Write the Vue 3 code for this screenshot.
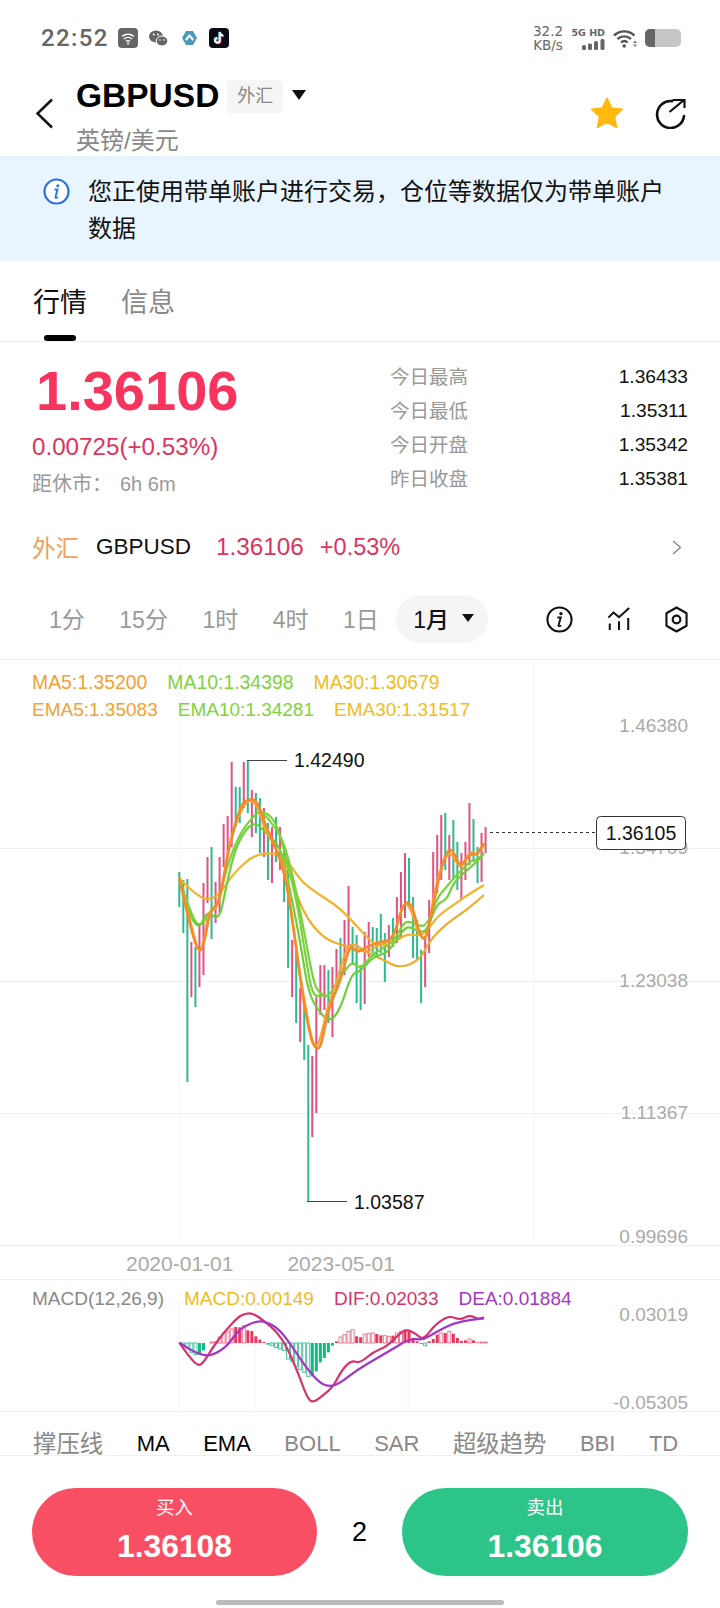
<script setup>
// coordinates of the chart are page pixels, series are traced at 3x
const barX = (i) => 179.3 + 4.03 * i

const candles = [
  ['g', 872, 907], ['g', 880, 933], ['g', 879, 1082], ['r', 942, 997], ['g', 947, 1007], ['r', 923, 987], ['r', 883, 975],
  ['r', 857, 903], ['g', 847, 939], ['r', 882, 923], ['r', 857, 913], ['r', 824, 867], ['r', 816, 855], ['r', 762, 847],
  ['g', 787, 827], ['g', 787, 823], ['r', 762, 808], ['g', 760, 813], ['r', 790, 837], ['g', 793, 833], ['g', 798, 853],
  ['r', 808, 857], ['g', 823, 880], ['r', 827, 883], ['g', 817, 862], ['r', 827, 870], ['g', 850, 902], ['g', 870, 968],
  ['r', 940, 997], ['g', 945, 1023], ['r', 988, 1042], ['g', 1000, 1060], ['g', 1045, 1201], ['r', 1056, 1137], ['r', 997, 1113],
  ['r', 965, 1015], ['r', 965, 1010], ['g', 970, 1023], ['r', 967, 1037], ['r', 949, 990], ['g', 938, 977], ['r', 920, 975],
  ['r', 886, 947], ['g', 927, 965], ['g', 935, 1003], ['g', 965, 1010], ['r', 932, 1004], ['r', 922, 957], ['g', 927, 953],
  ['g', 928, 957], ['g', 914, 953], ['g', 933, 982], ['r', 925, 957], ['g', 918, 947], ['r', 897, 943], ['r', 872, 937],
  ['r', 853, 918], ['g', 858, 907], ['g', 897, 958], ['g', 920, 960], ['g', 950, 1003], ['r', 937, 987], ['r', 900, 953],
  ['r', 852, 910], ['r', 835, 893], ['r', 815, 880], ['g', 813, 870], ['r', 835, 880], ['g', 820, 880], ['g', 842, 890],
  ['r', 853, 900], ['r', 842, 880], ['r', 803, 865], ['g', 819, 862], ['g', 847, 883], ['r', 833, 882], ['r', 827, 853],
]

function smooth(flat, ox, oy) {
  const p = []
  for (let i = 0; i < flat.length; i += 2) p.push([ox + flat[i] / 3, oy + flat[i + 1] / 3])
  let d = `M${p[0][0].toFixed(1)} ${p[0][1].toFixed(1)}`
  for (let i = 1; i < p.length - 1; i++) {
    const mx = (p[i][0] + p[i + 1][0]) / 2
    const my = (p[i][1] + p[i + 1][1]) / 2
    d += `Q${p[i][0].toFixed(1)} ${p[i][1].toFixed(1)} ${mx.toFixed(1)} ${my.toFixed(1)}`
  }
  const l = p[p.length - 1]
  return d + `L${l[0].toFixed(1)} ${l[1].toFixed(1)}`
}

const priceLines = [
  { color: '#f3b32a', w: 2.2, d: smooth([58, 415, 120, 480, 170, 475, 220, 400, 280, 345, 340, 338, 375, 350, 420, 420, 470, 460, 520, 490, 560, 525, 610, 580, 650, 620, 700, 610, 740, 580, 790, 590, 830, 530, 880, 495, 930, 460, 972, 435], 160, 740) },
  { color: '#f0ab2a', w: 2.2, d: smooth([375, 360, 410, 470, 450, 550, 500, 600, 560, 620, 620, 635, 670, 660, 720, 685, 780, 660, 810, 600, 860, 550, 920, 510, 972, 465], 160, 740) },
  { color: '#78d23c', w: 2.2, d: smooth([300, 210, 360, 270, 395, 390, 430, 560, 455, 700, 470, 750, 490, 765], 160, 740) },
  { color: '#78d23c', w: 2.2, d: smooth([58, 415, 85, 500, 118, 570, 150, 510, 170, 510, 200, 380, 240, 280, 275, 235, 300, 210, 345, 235, 375, 340, 410, 480, 440, 670, 458, 770, 490, 765, 505, 770, 530, 730, 575, 660, 600, 690, 640, 640, 680, 620, 710, 590, 735, 540, 770, 555, 800, 560, 830, 475, 860, 440, 885, 410, 910, 385, 935, 360, 950, 360, 972, 340], 160, 740) },
  { color: '#6cd03a', w: 2.2, d: smooth([58, 415, 85, 520, 118, 570, 140, 510, 178, 545, 200, 430, 230, 310, 280, 240, 320, 280, 360, 320, 380, 400, 420, 600, 445, 760, 480, 820, 510, 845, 540, 810, 575, 700, 600, 695, 640, 650, 680, 640, 710, 600, 740, 555, 775, 575, 800, 575, 830, 490, 860, 480, 880, 430, 910, 400, 940, 375, 972, 340], 160, 740) },
  { color: '#f5a33a', w: 2.2, d: smooth([58, 415, 90, 540, 118, 650, 135, 590, 145, 510, 178, 505, 205, 320, 235, 230, 262, 178, 290, 190, 310, 260, 345, 320, 375, 380, 395, 520, 420, 700, 440, 820, 455, 900, 470, 925, 485, 880, 500, 810, 525, 740, 560, 620, 585, 610, 620, 640, 660, 610, 700, 600, 730, 480, 755, 510, 775, 585, 800, 600, 815, 500, 840, 385, 870, 330, 890, 370, 905, 385, 930, 330, 950, 350, 972, 315], 160, 740) },
  { color: '#f28c28', w: 2.6, d: smooth([58, 415, 90, 560, 118, 645, 135, 600, 150, 510, 178, 490, 205, 330, 240, 200, 262, 178, 290, 178, 310, 240, 340, 305, 375, 400, 400, 560, 425, 750, 445, 860, 460, 920, 480, 930, 495, 860, 510, 790, 540, 730, 570, 610, 590, 640, 620, 620, 660, 605, 700, 600, 730, 485, 755, 490, 775, 570, 795, 610, 815, 520, 835, 420, 860, 330, 880, 330, 900, 385, 930, 340, 950, 345, 972, 310], 160, 740) },
]

const axisLabels = [
  { y: 725, t: '1.46380' },
  { y: 847, t: '1.34709' },
  { y: 980, t: '1.23038' },
  { y: 1112, t: '1.11367' },
  { y: 1236, t: '0.99696' },
]

const macdZero = 1343
// height in 3x pixels, h = hollow
const histRaw = [
  0, '-5h', '-15h', '-28h', '-35h', -35, -22, 0, '3h', '4h', '18h', '30h', '35h', '42h', 48, 47, '52h', 38, 36, 20, 10, 3,
  -5, '-8h', '-14h', '-18h', '-22h', '-48h', '-55h', '-70h', '-80h', '-88h', '-100h', -100, -85, -58, -45, -28, -8, 5,
  '18h', '25h', '35h', '40h', 20, 17, '27h', '29h', '30h', 27, 23, '22h', '20h', 22, '30h', '35h', 40, 35, 15, 5, -3,
  '-8h', 5, 12, 25, '30h', 30, '35h', 28, 15, 6, 8, '12h', 8, 2, '3h', '3h',
]
const hist = histRaw.map((v, i) => {
  const hollow = typeof v === 'string'
  const n = parseFloat(v) / 3
  const h = Math.abs(n)
  const up = n >= 0
  return {
    x: barX(i) - 1.5,
    y: up ? macdZero - h : macdZero,
    w: 3,
    h,
    fill: hollow ? 'none' : up ? '#e8375a' : '#13b981',
    stroke: hollow ? (up ? '#ee7890' : '#46c39f') : 'none',
  }
}).filter((b) => b.h > 0)

const difPath = smooth([28, 158, 60, 205, 88, 230, 105, 210, 130, 170, 160, 130, 200, 85, 225, 70, 250, 70, 285, 95, 320, 125, 350, 170, 385, 250, 410, 320, 428, 340, 460, 315, 490, 290, 515, 240, 545, 210, 570, 220, 610, 185, 650, 170, 690, 130, 710, 118, 735, 130, 760, 150, 790, 110, 815, 90, 840, 78, 870, 90, 900, 75, 925, 88, 942, 82], 170, 1290)
const deaPath = smooth([28, 158, 60, 180, 100, 197, 130, 195, 170, 170, 210, 115, 260, 93, 290, 95, 330, 120, 370, 175, 410, 235, 450, 280, 480, 290, 510, 280, 560, 240, 620, 205, 680, 170, 720, 145, 760, 150, 800, 125, 850, 100, 900, 90, 942, 85], 170, 1290)

const stats = [
  { label: '今日最高', value: '1.36433' },
  { label: '今日最低', value: '1.35311' },
  { label: '今日开盘', value: '1.35342' },
  { label: '昨日收盘', value: '1.35381' },
]
const periods = ['1分', '15分', '1时', '4时', '1日']
const indicators = [
  { t: '撑压线', cjk: true },
  { t: 'MA', on: true },
  { t: 'EMA', on: true },
  { t: 'BOLL' },
  { t: 'SAR' },
  { t: '超级趋势', cjk: true },
  { t: 'BBI' },
  { t: 'TD' },
]
</script>

<template>
  <div class="page">
    <div class="status">
      <span class="time">22:52</span>
      <svg class="ic-box" width="20" height="20" viewBox="0 0 20 20">
        <rect width="20" height="20" rx="4" fill="#666" />
        <path d="M4 8.5c3.500-3 8.500-3 12 0M6 11c2.500-2 5.500-2 8 0M8 13.300c1.200-.8 2.800-.8 4 0" fill="none" stroke="#fff" stroke-width="1.400" />
        <circle cx="10" cy="15.500" r="1.100" fill="#fff" />
      </svg>
      <svg class="ic-chat" width="19" height="17" viewBox="0 0 19 17">
        <ellipse cx="7" cy="6.500" rx="7" ry="6" fill="#666" />
        <ellipse cx="13" cy="11" rx="5.800" ry="5" fill="#666" stroke="#fff" stroke-width="1" />
        <circle cx="4.800" cy="4.500" r="1" fill="#fff" />
        <circle cx="9" cy="4.500" r="1" fill="#fff" />
        <circle cx="11" cy="10" r=".8" fill="#fff" />
        <circle cx="15" cy="10" r=".8" fill="#fff" />
      </svg>
      <svg class="ic-hex" width="15" height="14" viewBox="0 0 15 14">
        <path d="M4 0h7l4 7-4 7H4L0 7z" fill="#4d98b8" />
        <path d="M3.800 9l3.700-4.500L11.200 9" fill="none" stroke="#fff" stroke-width="2" />
      </svg>
      <svg class="ic-tt" width="20" height="20" viewBox="0 0 20 20">
        <rect width="20" height="20" rx="4" fill="#0b0b12" />
        <path d="M10.800 4v8.400a2.300 2.300 0 1 1-2.300-2.300M10.800 4.500c.4 1.900 1.600 3 3.400 3.200" fill="none" stroke="#ff2f55" stroke-width="2" transform="translate(.7 .5)" />
        <path d="M10.800 4v8.400a2.300 2.300 0 1 1-2.300-2.300M10.800 4.500c.4 1.900 1.600 3 3.400 3.200" fill="none" stroke="#4fe6ea" stroke-width="2" transform="translate(-.5 -.3)" />
        <path d="M10.800 4v8.400a2.300 2.300 0 1 1-2.300-2.300M10.800 4.500c.4 1.900 1.600 3 3.400 3.200" fill="none" stroke="#fff" stroke-width="1.700" />
      </svg>
      <div class="spacer"></div>
      <div class="speed"><span>32.2</span><span>KB/s</span></div>
      <div class="net">
        <span>5G HD</span>
        <svg width="23" height="11" viewBox="0 0 23 11">
          <rect x="0" y="6" width="4" height="5" rx="1.500" fill="#666" />
          <rect x="6" y="4.500" width="4" height="6.500" rx="1.500" fill="#666" />
          <rect x="12" y="2" width="4" height="9" rx="1.500" fill="#666" />
          <rect x="18.500" y="0" width="4" height="11" rx="1.500" fill="#666" />
        </svg>
      </div>
      <svg class="ic-wifi" width="25" height="19" viewBox="0 0 25 19">
        <path d="M1 6.500c6-5.500 14.500-5.500 20.500 0M4.500 10c4-3.500 9.500-3.500 13.500 0M8 13.500c2-1.700 4.500-1.700 6.500 0" fill="none" stroke="#555" stroke-width="2.400" />
        <circle cx="11.200" cy="17" r="1.800" fill="#555" />
        <path d="M20 14l2-2.500 2 2.500zM20 15.500h4L22 18z" fill="#777" />
      </svg>
      <div class="battery"><div class="battery-level"></div></div>
    </div>

    <div class="header">
      <svg class="back" width="19" height="31" viewBox="0 0 19 31">
        <path d="M17 1.500L2.500 15.500 17 29.500" fill="none" stroke="#111" stroke-width="2.500" />
      </svg>
      <div class="title-col">
        <div class="title-row">
          <span class="symbol">GBPUSD</span>
          <span class="tag">外汇</span>
          <span class="tri big"></span>
        </div>
        <div class="subtitle">英镑/美元</div>
      </div>
      <div class="spacer"></div>
      <svg class="star" width="34" height="32" viewBox="0 0 36 34">
        <path d="M18 1.500l4.800 10.400 11.200 1.300-8.300 7.700 2.300 11.100L18 26.400 8 32l2.300-11.100L2 13.200l11.200-1.300z" fill="#ffb90f" stroke="#ffb90f" stroke-width="2" stroke-linejoin="round" />
      </svg>
      <svg class="share" width="32" height="31" viewBox="0 0 32 31">
        <path d="M17 3.100A13.500 13.500 0 1 0 29 18" fill="none" stroke="#111" stroke-width="2.600" stroke-linecap="round" />
        <path d="M14.500 14L29 2M17.500 2H29.500V10" fill="none" stroke="#111" stroke-width="2.200" />
      </svg>
    </div>

    <div class="banner">
      <svg class="banner-icon" width="27" height="27" viewBox="0 0 27 27">
        <circle cx="13.500" cy="13.500" r="12" fill="#fff" stroke="#2b6fe0" stroke-width="2.200" />
        <circle cx="14.800" cy="7.800" r="1.500" fill="#2b6fe0" />
        <path d="M11.500 11.500h3l-2 7.500c-.2 1 .8 1.200 2.400.3" fill="none" stroke="#2b6fe0" stroke-width="1.800" />
      </svg>
      <p class="banner-text">您正使用带单账户进行交易，仓位等数据仅为带单账户数据</p>
    </div>

    <div class="tabs">
      <div class="tab active">行情<i class="tab-bar"></i></div>
      <div class="tab">信息</div>
    </div>

    <div class="quote">
      <div class="quote-left">
        <div class="price">1.36106</div>
        <div class="change">0.00725(+0.53%)</div>
        <div class="close-in"><span>距休市：</span><span class="close-val">6h 6m</span></div>
      </div>
      <div class="stats">
        <div v-for="s in stats" :key="s.label" class="stat">
          <span class="stat-label">{{ s.label }}</span>
          <span class="stat-value">{{ s.value }}</span>
        </div>
      </div>
    </div>

    <div class="source">
      <span class="src-type">外汇</span>
      <span class="src-name">GBPUSD</span>
      <span class="src-price">1.36106</span>
      <span class="src-pct">+0.53%</span>
      <div class="spacer"></div>
      <svg width="10" height="15" viewBox="0 0 10 15">
        <path d="M1 1l7.500 6.500L1 14" fill="none" stroke="#888" stroke-width="1.400" />
      </svg>
    </div>

    <div class="periods">
      <span v-for="p in periods" :key="p" class="period">{{ p }}</span>
      <span class="period-on">1月<i class="tri"></i></span>
      <div class="tools">
        <svg width="27" height="27" viewBox="0 0 28 28">
          <circle cx="14" cy="14" r="12.500" fill="none" stroke="#111" stroke-width="2.200" />
          <circle cx="15.500" cy="8" r="1.700" fill="#111" />
          <path d="M11.800 12h3.500l-2.300 8c-.2 1 1 1.200 2.800.2" fill="none" stroke="#111" stroke-width="2" />
        </svg>
        <svg width="24" height="24" viewBox="0 0 26 26">
          <path d="M1.500 11.500L7 6l6 5L24 1" fill="none" stroke="#111" stroke-width="2.200" />
          <path d="M3 18v7M13 15.500V25M23 12v13" fill="none" stroke="#111" stroke-width="2.200" />
        </svg>
        <svg width="23" height="27" viewBox="0 0 24 28">
          <path d="M12 1.500l10.500 6v13L12 26.500 1.500 20.500v-13z" fill="none" stroke="#111" stroke-width="2.200" stroke-linejoin="round" />
          <circle cx="12" cy="14" r="4" fill="none" stroke="#111" stroke-width="2.200" />
        </svg>
      </div>
    </div>

    <div class="pane main-pane">
      <svg class="pane-svg" width="720" height="587" viewBox="0 659 720 587">
        <path d="M179 660V1246M534 660V1246" stroke="#f6f6f6" stroke-width="1" />
        <path d="M0 848.500H720M0 981.500H720M0 1113.500H720M0 1245.500H720" stroke="#f0f0f0" stroke-width="1" />
        <text v-for="a in axisLabels" :key="a.t" class="axis" x="688" :y="a.y + 7" text-anchor="end">{{ a.t }}</text>
        <rect v-for="(c, i) in candles" :key="i" :x="barX(i) - 1" :y="c[1]" width="2" :height="c[2] - c[1]"
          :fill="c[0] === 'r' ? '#e0527f' : '#2fb98f'" />
        <path v-for="(l, i) in priceLines" :key="i" :d="l.d" fill="none" :stroke="l.color" :stroke-width="l.w" stroke-linejoin="round" />
        <path d="M247 760.500H287M307 1201.500H347" stroke="#444" stroke-width="1" />
        <text class="mark" x="294" y="767">1.42490</text>
        <text class="mark" x="354" y="1209">1.03587</text>
        <path d="M490 832.500H596" stroke="#333" stroke-width="1" stroke-dasharray="3 3" />
        <rect x="596.500" y="816.500" width="89" height="33" rx="4" fill="#fff" stroke="#333" stroke-width="1" />
        <text class="mark" x="641" y="840" text-anchor="middle">1.36105</text>
      </svg>
      <div class="legend legend-ma">
        <span class="c-ma5">MA5:1.35200</span>
        <span class="c-ma10">MA10:1.34398</span>
        <span class="c-ma30">MA30:1.30679</span>
      </div>
      <div class="legend">
        <span class="c-ma5">EMA5:1.35083</span>
        <span class="c-ma10">EMA10:1.34281</span>
        <span class="c-ma30">EMA30:1.31517</span>
      </div>
    </div>

    <div class="dates">
      <span>2020-01-01</span>
      <span>2023-05-01</span>
    </div>

    <div class="pane macd-pane">
      <svg class="pane-svg" width="720" height="133" viewBox="0 1279 720 133">
        <path d="M179 1300V1412M255 1300V1412M408 1300V1412" stroke="#f4f4f4" stroke-width="1" />
        <text class="axis" x="688" y="1321" text-anchor="end">0.03019</text>
        <text class="axis" x="688" y="1409" text-anchor="end">-0.05305</text>
        <rect v-for="(b, i) in hist" :key="i" :x="b.x" :y="b.y" :width="b.w" :height="b.h" :fill="b.fill" :stroke="b.stroke" stroke-width="1" />
        <path :d="difPath" fill="none" stroke="#d6336c" stroke-width="2.200" stroke-linejoin="round" />
        <path :d="deaPath" fill="none" stroke="#a336c4" stroke-width="2.200" stroke-linejoin="round" />
      </svg>
      <div class="legend">
        <span class="c-gray">MACD(12,26,9)</span>
        <span class="c-ma30">MACD:0.00149</span>
        <span class="c-dif">DIF:0.02033</span>
        <span class="c-dea">DEA:0.01884</span>
      </div>
    </div>

    <div class="indicators">
      <span v-for="t in indicators" :key="t.t" class="ind" :class="{ on: t.on, cjk: t.cjk }">{{ t.t }}</span>
    </div>

    <div class="actions">
      <div class="btn buy"><span class="btn-label">买入</span><span class="btn-price">1.36108</span></div>
      <div class="lots">2</div>
      <div class="btn sell"><span class="btn-label">卖出</span><span class="btn-price">1.36106</span></div>
    </div>
    <div class="home-bar"></div>
  </div>
</template>

<style scoped>
.page {
  width: 720px;
  height: 1608px;
  overflow: hidden;
  background: #fff;
  color: #111;
  font-family: "Liberation Sans", "Noto Sans CJK SC", sans-serif;
}

.spacer {
  flex: 1;
}

.status {
  height: 66px;
  padding: 10px 40px 0 41px;
  box-sizing: border-box;
  display: flex;
  align-items: center;
}

.time {
  font-family: Roboto, sans-serif;
  font-weight: 500;
  font-size: 24px;
  letter-spacing: 1.400px;
  color: #666;
}

.ic-box {
  margin-left: 9px;
}

.ic-chat {
  margin-left: 11px;
}

.ic-hex {
  margin-left: 14px;
}

.ic-tt {
  margin-left: 12px;
}

.speed {
  display: flex;
  flex-direction: column;
  align-items: center;
  width: 36px;
  font-family: "DejaVu Sans", sans-serif;
  font-size: 13.500px;
  line-height: 14px;
  color: #666;
}

.net {
  margin-left: 5px;
  width: 34px;
  display: flex;
  flex-direction: column;
  align-items: flex-end;
  gap: 1px;
  font-family: "DejaVu Sans", sans-serif;
  font-weight: 700;
  font-size: 9.500px;
  line-height: 11px;
  white-space: nowrap;
  color: #666;
}

.ic-wifi {
  margin-left: 8px;
}

.battery {
  margin-left: 7px;
  margin-right: -1px;
  width: 36px;
  height: 18px;
  border-radius: 5px;
  background: #c6c6c6;
  overflow: hidden;
}

.battery-level {
  width: 10px;
  height: 100%;
  background: #666;
}

.header {
  height: 90px;
  padding: 0 33px 0 35px;
  display: flex;
  align-items: flex-start;
}

.back {
  margin-top: 32px;
}

.title-col {
  margin-left: 22px;
}

.title-row {
  display: flex;
  align-items: center;
  height: 46px;
  margin-top: 7px;
}

.symbol {
  font-size: 33.500px;
  font-weight: 700;
  line-height: 46px;
  color: #000;
}

.tag {
  margin-left: 8px;
  width: 56px;
  height: 33px;
  line-height: 33px;
  text-align: center;
  font-size: 18px;
  color: #888;
  background: #f5f5f5;
  border-radius: 4px;
}

.tri {
  display: inline-block;
  margin-left: 13px;
  width: 0;
  height: 0;
  border-left: 6px solid transparent;
  border-right: 6px solid transparent;
  border-top: 8px solid #111;
}

.tri.big {
  margin-left: 9px;
  margin-bottom: 2px;
  border-left-width: 7px;
  border-right-width: 7px;
  border-top-width: 10px;
}

.subtitle {
  margin-top: 6px;
  font-size: 24px;
  line-height: 32px;
  color: #888;
}

.star {
  margin-top: 31px;
}

.share {
  margin-top: 32px;
  margin-left: 31px;
}

.banner {
  height: 105px;
  padding: 17px 40px 0 43px;
  box-sizing: border-box;
  background: #e8f4fe;
  display: flex;
  align-items: flex-start;
}

.banner-icon {
  flex: none;
  margin-top: 5px;
}

.banner-text {
  margin: 0 0 0 18px;
  font-size: 24px;
  line-height: 37px;
  color: #111;
}

.tabs {
  height: 81px;
  box-sizing: border-box;
  border-bottom: 1px solid #f0f0f0;
  padding: 22px 33px 0 33px;
  display: flex;
  gap: 34px;
}

.tab {
  position: relative;
  font-size: 27px;
  line-height: 40px;
  color: #888;
}

.tab.active {
  color: #111;
}

.tab-bar {
  position: absolute;
  left: 11px;
  top: 52px;
  width: 32px;
  height: 6px;
  border-radius: 3px;
  background: #000;
}

.quote {
  height: 180px;
  padding: 0 32px;
  display: flex;
  justify-content: space-between;
}

.price {
  margin-top: 21px;
  margin-left: 4px;
  font-size: 56px;
  line-height: 56px;
  font-weight: 700;
  color: #f6345e;
}

.change {
  margin-top: 14px;
  font-size: 24.200px;
  line-height: 28px;
  color: #e0325f;
}

.close-in {
  margin-top: 10px;
  font-size: 20px;
  line-height: 26px;
  color: #999;
}

.close-val {
  margin-left: 8px;
}

.stats {
  width: 298px;
  padding-top: 18px;
}

.stat {
  display: flex;
  justify-content: space-between;
  height: 34px;
  line-height: 34px;
}

.stat-label {
  font-size: 19.500px;
  color: #999;
}

.stat-value {
  font-size: 19.200px;
  color: #111;
}

.source {
  height: 50px;
  padding: 0 38px 0 32px;
  display: flex;
  align-items: center;
  font-size: 23.500px;
}

.src-type {
  color: #f0a060;
}

.src-name {
  margin-left: 17px;
  font-size: 22.500px;
  color: #111;
}

.src-price {
  margin-left: 25px;
  font-size: 24.300px;
  color: #e0325f;
}

.src-pct {
  margin-left: 16px;
  color: #e0325f;
}

.periods {
  height: 87px;
  box-sizing: border-box;
  padding: 23px 32px 16px 49px;
  display: flex;
  align-items: center;
  gap: 34.500px;
  font-size: 23px;
}

.period {
  padding-bottom: 3px;
  color: #999;
  white-space: nowrap;
}

.period-on {
  flex: none;
  margin-left: -17px;
  height: 48px;
  width: 92px;
  box-sizing: border-box;
  padding: 0 0 3px 17px;
  border-radius: 24px;
  background: #f5f5f5;
  display: flex;
  align-items: center;
  font-weight: 500;
  white-space: nowrap;
  color: #111;
}

.tools {
  margin-left: auto;
  display: flex;
  align-items: center;
  gap: 34px;
}

.pane {
  position: relative;
  box-sizing: border-box;
  border-top: 1px solid #f0f0f0;
}

.pane-svg {
  position: absolute;
  left: 0;
  top: -1px;
}

.main-pane {
  height: 587px;
  padding-top: 9px;
}

.macd-pane {
  height: 133px;
  padding-top: 5px;
  border-bottom: 1px solid #f0f0f0;
}

.legend {
  position: relative;
  display: flex;
  gap: 20px;
  padding-left: 32px;
  font-size: 19px;
  line-height: 27px;
}

.legend-ma {
  font-size: 19.400px;
}

.c-ma5 {
  color: #f5a033;
}

.c-ma10 {
  color: #7ed33c;
}

.c-ma30 {
  color: #f3bb1c;
}

.c-gray {
  color: #888;
}

.c-dif {
  color: #d6336c;
}

.c-dea {
  color: #a336c4;
}

.axis {
  font-size: 19px;
  fill: #aaa;
}

.mark {
  font-size: 19.500px;
  fill: #111;
}

.dates {
  height: 33px;
  padding: 5px 0 0 126px;
  box-sizing: border-box;
  display: flex;
  gap: 54px;
  font-size: 21px;
  line-height: 26px;
  color: #aaa;
}

.indicators {
  height: 44px;
  box-sizing: border-box;
  border-bottom: 1px solid #f0f0f0;
  padding: 20px 0 0 33px;
  display: flex;
  gap: 33.500px;
  font-size: 22px;
  line-height: 24px;
  color: #888;
  white-space: nowrap;
}

.ind.cjk {
  font-size: 23.400px;
}

.ind.on {
  color: #000;
}

.actions {
  margin-top: 32px;
  padding: 0 32px;
  display: flex;
  align-items: center;
}

.btn {
  height: 88px;
  width: 285px;
  border-radius: 44px;
  display: flex;
  flex-direction: column;
  align-items: center;
  color: #fff;
}

.buy {
  background: #f94f64;
}

.sell {
  width: 286px;
  background: #2dc48a;
}

.btn-label {
  margin-top: 8px;
  font-size: 18.500px;
  line-height: 24px;
}

.btn-price {
  margin-top: 9px;
  font-size: 31.800px;
  line-height: 34px;
  font-weight: 700;
}

.lots {
  flex: 1;
  text-align: center;
  font-size: 27px;
  color: #000;
}

.home-bar {
  width: 288px;
  height: 5px;
  margin: 24px auto 0;
  border-radius: 3px;
  background: #bbb;
}
</style>
